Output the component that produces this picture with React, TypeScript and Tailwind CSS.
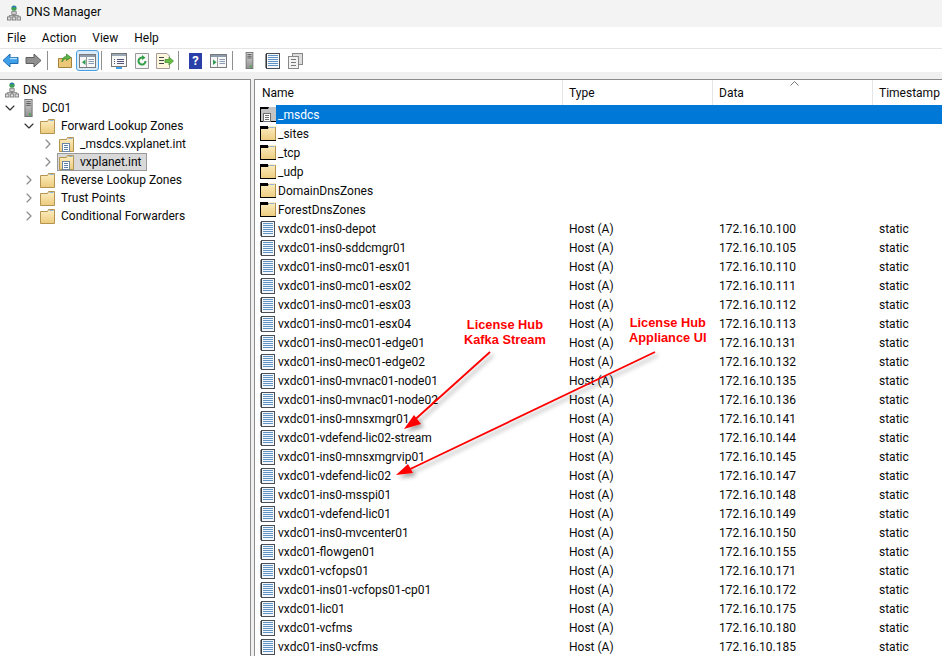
import React from "react";
import { ChevronDown, ChevronRight } from "lucide-react";

const font = "font-['Roboto','Noto_Sans',sans-serif]";

const folders = ["_sites", "_tcp", "_udp", "DomainDnsZones", "ForestDnsZones"];

const hosts: [string, string][] = [
  ["vxdc01-ins0-depot", "172.16.10.100"],
  ["vxdc01-ins0-sddcmgr01", "172.16.10.105"],
  ["vxdc01-ins0-mc01-esx01", "172.16.10.110"],
  ["vxdc01-ins0-mc01-esx02", "172.16.10.111"],
  ["vxdc01-ins0-mc01-esx03", "172.16.10.112"],
  ["vxdc01-ins0-mc01-esx04", "172.16.10.113"],
  ["vxdc01-ins0-mec01-edge01", "172.16.10.131"],
  ["vxdc01-ins0-mec01-edge02", "172.16.10.132"],
  ["vxdc01-ins0-mvnac01-node01", "172.16.10.135"],
  ["vxdc01-ins0-mvnac01-node02", "172.16.10.136"],
  ["vxdc01-ins0-mnsxmgr01", "172.16.10.141"],
  ["vxdc01-vdefend-lic02-stream", "172.16.10.144"],
  ["vxdc01-ins0-mnsxmgrvip01", "172.16.10.145"],
  ["vxdc01-vdefend-lic02", "172.16.10.147"],
  ["vxdc01-ins0-msspi01", "172.16.10.148"],
  ["vxdc01-vdefend-lic01", "172.16.10.149"],
  ["vxdc01-ins0-mvcenter01", "172.16.10.150"],
  ["vxdc01-flowgen01", "172.16.10.155"],
  ["vxdc01-vcfops01", "172.16.10.171"],
  ["vxdc01-ins01-vcfops01-cp01", "172.16.10.172"],
  ["vxdc01-lic01", "172.16.10.175"],
  ["vxdc01-vcfms", "172.16.10.180"],
  ["vxdc01-ins0-vcfms", "172.16.10.185"],
];

const FolderGradient = () => (
  <defs>
    <linearGradient id="folderFill" x1="0" y1="0" x2="0" y2="1">
      <stop offset="0" stopColor="#fdeec2" />
      <stop offset="1" stopColor="#eccb7c" />
    </linearGradient>
  </defs>
);

const Folder = ({ zone = false }: { zone?: boolean }) => (
  <svg width="15" height="16" viewBox="0 0 15 16" className="shrink-0">
    <FolderGradient />
    <path d="M0.500 3.500H7.500L8.500 1.500H14.500V15.500H0.500Z" fill="url(#folderFill)" stroke="#b3954f" />
    <path d="M9.500 2.500H13.500" stroke="#8fb4d8" />
    {zone && (
      <>
        <rect x="3.500" y="7.500" width="7" height="8" fill="#fff" stroke="#6b87a8" />
        <path d="M5 9.500H9M5 11.500H9M5 13.500H9" stroke="#5b7fa6" />
      </>
    )}
  </svg>
);

const ListFolder = () => (
  <svg width="16" height="15" viewBox="0 0 16 15" className="shrink-0">
    <FolderGradient />
    <rect width="16" height="15" fill="#000" />
    <rect x="8" width="8" height="1" fill="#fff" />
    <path d="M1 15V3H8L9 0H16V14H1Z" fill="url(#folderFill)" />
    <path d="M9.500 1.500H14.500" stroke="#8fb4d8" />
    <path d="M15.500 1V14" stroke="#b3954f" />
    <rect x="1" y="14" width="15" height="1" fill="#000" />
  </svg>
);

const ZoneDoc = () => (
  <svg width="16" height="15" viewBox="0 0 16 15" className="shrink-0">
    <rect width="16" height="15" fill="#000" />
    <path d="M1 14V2H8L9 0H16V14Z" fill="#c4c4c4" />
    <rect x="3.500" y="6.500" width="7" height="8" fill="#fff" stroke="#6e6e6e" />
    <path d="M5 8.500H9M5 10.500H9M5 12.500H9" stroke="#6e6e6e" />
  </svg>
);

const RecordDoc = () => (
  <svg width="16" height="16" viewBox="0 0 16 16" className="shrink-0">
    <rect x="1.500" y="0.500" width="13" height="15" fill="#f4f8fc" stroke="#4a4f57" />
    <path d="M3 2.500H13M3 4.500H13M3 6.500H13M3 8.500H13M3 10.500H13M3 12.500H13" stroke="#5f93c4" />
    <path d="M1 1.500V15" stroke="#222" strokeWidth="2" strokeDasharray="1 1" />
  </svg>
);

const ServerNode = ({ height = 20 }: { height?: number }) => (
  <svg width="9" height={height} viewBox="0 0 9 20" className="shrink-0">
    <defs>
      <linearGradient id="serverFill" x1="0" y1="0" x2="0" y2="1">
        <stop offset="0" stopColor="#d6d6d6" />
        <stop offset="1" stopColor="#8f8f8f" />
      </linearGradient>
    </defs>
    <rect x="0.500" y="0.500" width="8" height="19" fill="url(#serverFill)" stroke="#6b6b6b" />
    <path d="M2 3H7M2 5H7M2 7H7" stroke="#4f4f4f" />
    <rect x="5" y="16" width="2" height="2" fill="#3cb043" />
  </svg>
);

const DnsIcon = ({ width = 14 }: { width?: number }) => (
  <svg width={width} height="18" viewBox="0 0 16 18" className="shrink-0">
    <circle cx="8" cy="3.500" r="3" fill="#3f9d4f" />
    <path d="M6 2.500C7 1 9 1 10 2.500" stroke="#2e78c7" strokeWidth="1.500" fill="none" />
    <rect x="5.500" y="7.500" width="5" height="3" fill="#ddd" stroke="#777" />
    <rect x="0.500" y="13.500" width="4" height="3.500" fill="#ddd" stroke="#777" />
    <rect x="6" y="13.500" width="4" height="3.500" fill="#ddd" stroke="#777" />
    <rect x="11.500" y="13.500" width="4" height="3.500" fill="#ddd" stroke="#777" />
    <path d="M8 10.500V13.500M2.500 13.500V12H13.500V13.500" stroke="#777" fill="none" />
  </svg>
);

const ToolButton = ({ children, active = false }: { children: React.ReactNode; active?: boolean }) => (
  <div className={`flex h-[21px] w-[23px] shrink-0 items-center justify-center rounded-[3px] border ${active ? "border-[#4a9fe0] bg-[#d9ebf9]" : "border-transparent"}`}>
    {children}
  </div>
);

const Sep = () => <div className="ml-[2px] mr-[5px] h-[19px] w-px shrink-0 bg-[#8f8f8f]" />;

const PaneIcon = ({ arrow }: { arrow: "left" | "right" }) => (
  <svg width="17" height="14" viewBox="0 0 17 14">
    <rect x="0.500" y="0.500" width="16" height="13" fill="#f7f7f7" stroke="#7a7a7a" />
    <rect x="1" y="1" width="15" height="2" fill="#8c9bab" />
    <path d="M7.500 3V13" stroke="#999" />
    <path d={arrow === "left" ? "M6.500 5.500V11L3 8.300Z" : "M3 5.500V11L6.500 8.300Z"} fill="#2c9a52" />
    <path d="M9.500 5.500H15M9.500 7.500H15M9.500 9.500H15" stroke="#8a9db0" />
  </svg>
);

const Toolbar = () => (
  <div className="-ml-[1px] flex h-[23px] items-center bg-white">
    <ToolButton>
      <svg width="17" height="15" viewBox="0 0 17 15">
        <path d="M1 7.500L8 1V4.500H16V10.500H8V14Z" fill="#3f9fe8" stroke="#1d6cb3" />
        <path d="M8 5.500H15" stroke="#b5e0ff" strokeWidth="1.500" />
      </svg>
    </ToolButton>
    <ToolButton>
      <svg width="17" height="15" viewBox="0 0 17 15">
        <path d="M16 7.500L9 1V4.500H1V10.500H9V14Z" fill="#8f8f8f" stroke="#5e5e5e" />
      </svg>
    </ToolButton>
    <Sep />
    <ToolButton>
      <svg width="16" height="16" viewBox="0 0 16 16">
        <path d="M1.500 5.500V14.500H14.500V4.500H9L8 5.500Z" fill="#ecc878" stroke="#a3833c" />
        <path d="M5 9C5 5 7 3.500 9.500 3.500V1L14 4.500L9.500 7.500V5.500C8 5.500 6.500 6.500 5 9Z" fill="#5fb548" stroke="#38802c" strokeWidth="0.700" />
      </svg>
    </ToolButton>
    <ToolButton active>
      <PaneIcon arrow="left" />
    </ToolButton>
    <Sep />
    <ToolButton>
      <svg width="16" height="16" viewBox="0 0 16 16">
        <rect x="0.500" y="0.500" width="15" height="13" fill="#f7f7f7" stroke="#777" />
        <rect x="1" y="1" width="14" height="2" fill="#9aa7b5" />
        <path d="M3 6.500H4M6 6.500H13M3 8.500H4M6 8.500H13M3 10.500H4M6 10.500H13" stroke="#557" />
        <rect x="5" y="14" width="6" height="2" fill="#3f9fe8" />
      </svg>
    </ToolButton>
    <ToolButton>
      <svg width="14" height="16" viewBox="0 0 14 16">
        <path d="M0.500 0.500H13.500V15.500H0.500Z" fill="#f7f7f7" stroke="#999" />
        <path d="M10.500 8A3.500 3.500 0 1 1 8 4.700" stroke="#2f9e44" strokeWidth="2" fill="none" />
        <path d="M7 2L10.500 4.800L7 7Z" fill="#2f9e44" />
      </svg>
    </ToolButton>
    <ToolButton>
      <svg width="18" height="16" viewBox="0 0 18 16">
        <path d="M0.500 0.500H11L13.500 3V15.500H0.500Z" fill="#fbf6dc" stroke="#a99" />
        <path d="M3 4.500H8M3 7.500H8M3 10.500H8" stroke="#444" />
        <path d="M9 6.500H13V4L17.500 8L13 12V9.500H9Z" fill="#69bd45" stroke="#3c8a2a" strokeWidth="0.700" />
      </svg>
    </ToolButton>
    <Sep />
    <ToolButton>
      <div className="flex h-[16px] w-[13px] items-center justify-center bg-[#2b3fa8] text-[13px] font-bold leading-none text-white">?</div>
    </ToolButton>
    <ToolButton>
      <PaneIcon arrow="right" />
    </ToolButton>
    <Sep />
    <ToolButton>
      <ServerNode height={17} />
    </ToolButton>
    <ToolButton>
      <RecordDoc />
    </ToolButton>
    <ToolButton>
      <svg width="15" height="16" viewBox="0 0 15 16">
        <rect x="4.500" y="0.500" width="10" height="11" fill="#ddd" stroke="#888" />
        <rect x="0.500" y="3.500" width="10" height="12" fill="#f2f2f2" stroke="#888" />
        <path d="M3 6.500H8M3 9.500H8M3 12.500H8" stroke="#777" />
      </svg>
    </ToolButton>
  </div>
);

const TreeRow = ({
  indent,
  open,
  icon,
  label,
  selected = false,
}: {
  indent: string;
  open?: boolean;
  icon: React.ReactNode;
  label: string;
  selected?: boolean;
}) => (
  <div className={`flex h-[18px] items-center ${indent}`}>
    <span className="flex w-[19px] shrink-0 justify-center">
      {open === true && <ChevronDown size={16} strokeWidth={1.750} className="text-[#333]" />}
      {open === false && <ChevronRight size={16} strokeWidth={1.750} className="text-[#8a8a8a]" />}
    </span>
    <span className={`flex h-[18px] items-center border pl-[1px] pr-[4px] ${selected ? "border-[#999] bg-[#d9d9d9]" : "border-transparent"}`}>
      <span className="flex w-[15px] shrink-0 justify-center">{icon}</span>
      <span className="ml-[6px] whitespace-nowrap">{label}</span>
    </span>
  </div>
);

const Row = ({ icon, name, type = "", data = "", ts = "" }: { icon: React.ReactNode; name: string; type?: string; data?: string; ts?: string }) => (
  <div className="flex h-[19px] items-center whitespace-nowrap">
    <div className="flex w-[308px] shrink-0 items-center pl-[5px]">
      {icon}
      <span className="ml-[2px]">{name}</span>
    </div>
    <div className="w-[150px] shrink-0 pl-[6px]">{type}</div>
    <div className="w-[160px] shrink-0 pl-[6px]">{data}</div>
    <div className="pl-[6px]">{ts}</div>
  </div>
);

const Annotations = () => (
  <svg width="942" height="656" viewBox="0 0 942 656" className="pointer-events-none absolute left-0 top-0">
    <defs>
      <filter id="arrowShadow" x="-10%" y="-10%" width="120%" height="120%">
        <feDropShadow dx="3" dy="3" stdDeviation="2" floodColor="#000" floodOpacity="0.35" />
      </filter>
    </defs>
    <g filter="url(#arrowShadow)">
      <path d="M490 352L410 424" stroke="#ff0000" strokeWidth="1.800" />
      <path d="M404 429L414 415L421 424Z" fill="#ff0000" />
      <path d="M655 352L404 472" stroke="#ff0000" strokeWidth="1.800" />
      <path d="M396 475L408 464L413 473Z" fill="#ff0000" />
    </g>
  </svg>
);

const Label = ({ lines, className }: { lines: string[]; className: string }) => (
  <div className={`absolute whitespace-nowrap text-center font-['Liberation_Sans',sans-serif] text-[12.800px] font-bold leading-[14.500px] text-[#ff0000] ${className}`}>
    {lines.map((line) => (
      <div key={line}>{line}</div>
    ))}
  </div>
);

export default function App() {
  return (
    <div className={`relative h-[656px] w-[942px] overflow-hidden bg-white text-[12px] text-[#0a0a0a] ${font}`}>
      <div className="flex h-[27px] items-center bg-[#f3f3f3] pb-[2px] pl-[7px] text-[12.200px]">
        <DnsIcon />
        <span className="ml-[5px]">DNS Manager</span>
      </div>
      <div className="flex h-[22px] items-center gap-[16px] border-b border-[#e5e5e5] bg-white pl-[7px]">
        <span>File</span>
        <span>Action</span>
        <span>View</span>
        <span>Help</span>
      </div>
      <Toolbar />
      <div className="h-[7px] bg-[#f0f0f0]" />
      <div className="flex h-[577px] bg-[#f0f0f0]">
        <div className="flex h-full w-[251px] shrink-0 flex-col border-r border-t border-[#8c8c8c] bg-white pt-[1px]">
          <div className="flex h-[18px] items-center pl-[5px]">
            <DnsIcon />
            <span className="ml-[4px]">DNS</span>
          </div>
          <TreeRow indent="pl-0" open icon={<ServerNode height={18} />} label="DC01" />
          <TreeRow indent="pl-[19px]" open icon={<Folder />} label="Forward Lookup Zones" />
          <TreeRow indent="pl-[38px]" open={false} icon={<Folder zone />} label="_msdcs.vxplanet.int" />
          <TreeRow indent="pl-[38px]" open={false} icon={<Folder zone />} label="vxplanet.int" selected />
          <TreeRow indent="pl-[19px]" open={false} icon={<Folder />} label="Reverse Lookup Zones" />
          <TreeRow indent="pl-[19px]" open={false} icon={<Folder />} label="Trust Points" />
          <TreeRow indent="pl-[19px]" open={false} icon={<Folder />} label="Conditional Forwarders" />
        </div>
        <div className="ml-[3px] flex h-full min-w-0 flex-1 flex-col border-l border-t border-[#8c8c8c] bg-white">
          <div className="relative flex h-[25px] shrink-0 items-center">
            <div className="flex h-full w-[308px] shrink-0 items-center border-r border-[#e5e5e5] pl-[7px]">Name</div>
            <div className="flex h-full w-[150px] shrink-0 items-center border-r border-[#e5e5e5] pl-[6px]">Type</div>
            <div className="flex h-full w-[160px] shrink-0 items-center border-r border-[#e5e5e5] pl-[6px]">Data</div>
            <div className="flex h-full items-center pl-[6px]">Timestamp</div>
            <svg width="9" height="5" viewBox="0 0 9 5" className="absolute left-[535px] top-[1px]">
              <path d="M0.500 4.500L4.500 0.500L8.500 4.500" stroke="#777" fill="none" />
            </svg>
          </div>
          <div className="flex h-[19px] items-center whitespace-nowrap">
            <div className="ml-[5px]">
              <ZoneDoc />
            </div>
            <div className="flex h-full flex-1 items-center bg-[#0078d7] pl-[2px] text-white">_msdcs</div>
          </div>
          {folders.map((name) => (
            <Row key={name} icon={<ListFolder />} name={name} />
          ))}
          {hosts.map(([name, ip]) => (
            <Row key={name} icon={<RecordDoc />} name={name} type="Host (A)" data={ip} ts="static" />
          ))}
        </div>
      </div>
      <Annotations />
      <Label lines={["License Hub", "Kafka Stream"]} className="left-[464px] top-[318px]" />
      <Label lines={["License Hub", "Appliance UI"]} className="left-[629px] top-[316px]" />
    </div>
  );
}
